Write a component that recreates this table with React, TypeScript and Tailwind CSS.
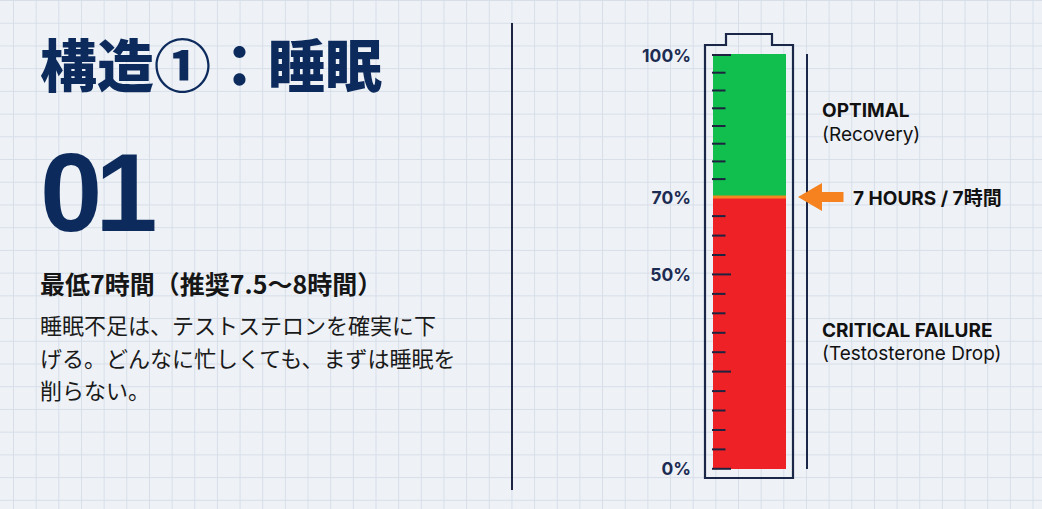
import React from "react";

const upperTicks = [55, 72.7, 90.5, 108.3, 126, 143.7, 161.4, 179.1];
const lowerTicks = [216.1, 235.6, 255, 274.4, 293.9, 313.3, 332.8, 352.2, 371.6, 391.1, 410.5, 430, 449.4, 468.8];
const longTicks = new Set([55, 274.4, 371.6, 468.8]);

function Gauge() {
  const ticks = [...upperTicks, ...lowerTicks];
  return (
    <svg className="absolute inset-0" width="422" height="509" viewBox="0 0 422 509">
      <rect x="93" y="54" width="73" height="143" fill="#10bf4e" />
      <rect x="93" y="197" width="73" height="272" fill="#ee2226" />
      <rect x="93" y="195.5" width="73" height="3" fill="#f5861f" />
      {ticks.map((y) => (
        <line
          key={y}
          x1="92"
          x2={longTicks.has(y) ? 111 : 105.5}
          y1={y}
          y2={y}
          stroke="#1e2340"
          strokeWidth="2"
        />
      ))}
      <path
        d="M85 478 V45 H106 V34 H152 V45 H173 V478 Z"
        fill="none"
        stroke="#1b2748"
        strokeWidth="2.2"
      />
      <line x1="187" x2="187" y1="54" y2="469" stroke="#1b2748" strokeWidth="2" />
      <polygon points="178,197 202,183 202,192 223.5,192 223.5,202 202,202 202,211" fill="#f5821f" />
    </svg>
  );
}

export default function App() {
  return (
    <div className="w-[1042px] h-[509px] overflow-hidden flex bg-[#eef2f7] bg-[linear-gradient(to_right,#d7dee8_1px,transparent_1px),linear-gradient(to_bottom,#d7dee8_1px,transparent_1px)] bg-[size:22.66px_22.72px] bg-[position:13px_0px] font-['Noto_Sans_CJK_JP',sans-serif]">
      <div className="w-[511px] shrink-0 pl-[40px] flex flex-col">
        <h1 className="mt-[27px] text-[57px] leading-[70px] font-black text-[#0c2a5c]">
          構造①：睡眠
        </h1>
        <div className="mt-[46px] text-[112px] leading-[100px] font-bold text-[#0c2a5c] font-['Liberation_Sans',sans-serif] tracking-[-7px]">
          01
        </div>
        <div className="mt-[24px] text-[25px] leading-[32px] font-bold text-[#161616]">
          最低7時間（推奨7.5〜8時間）
        </div>
        <p className="mt-[9px] text-[22px] leading-[32.5px] text-[#1a1a1a]">
          睡眠不足は、テストステロンを確実に下
          <br />
          げる。どんなに忙しくても、まずは睡眠を
          <br />
          削らない。
        </p>
      </div>
      <div className="w-[2px] shrink-0 bg-[#1c2541] mt-[23px] h-[467px]" />
      <div className="flex-1 flex justify-end">
        <div className="relative w-[422px] h-[509px] font-['Inter','Noto_Sans_CJK_JP',sans-serif]">
          <Gauge />
          <div className="absolute right-[351px] top-[56px] -translate-y-1/2 text-[17.5px] leading-none font-bold text-[#1c2b52]">100%</div>
          <div className="absolute right-[351px] top-[198px] -translate-y-1/2 text-[17.5px] leading-none font-bold text-[#1c2b52]">70%</div>
          <div className="absolute right-[351px] top-[275px] -translate-y-1/2 text-[17.5px] leading-none font-bold text-[#1c2b52]">50%</div>
          <div className="absolute right-[351px] top-[469px] -translate-y-1/2 text-[17.5px] leading-none font-bold text-[#1c2b52]">0%</div>

          <div className="absolute left-[202px] top-[99px] flex flex-col text-[19px] leading-[24px] text-[#111]">
            <span className="font-bold">OPTIMAL</span>
            <span>(Recovery)</span>
          </div>
          <div className="absolute left-[233px] top-[198px] -translate-y-1/2 text-[19px] leading-none font-bold text-[#111] whitespace-nowrap">
            7 HOURS / 7時間
          </div>
          <div className="absolute left-[202px] top-[319px] flex flex-col text-[19px] leading-[23px] text-[#111] whitespace-nowrap">
            <span className="font-bold">CRITICAL FAILURE</span>
            <span>(Testosterone Drop)</span>
          </div>
        </div>
      </div>
    </div>
  );
}
